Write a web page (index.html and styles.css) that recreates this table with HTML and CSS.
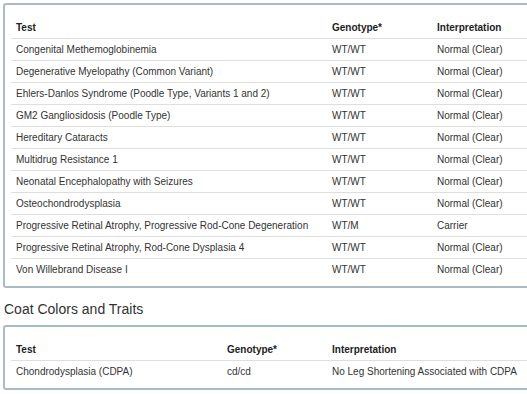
FILE: index.html
```html
<!DOCTYPE html>
<html lang="en">
<head>
  <meta charset="UTF-8" />
  <title>Genetic Results</title>
  <link rel="stylesheet" href="styles.css">
</head>
<body>

<!-- HEALTH RESULTS -->
<div class="card">
  <table class="results health">
    <thead>
      <tr>
        <th class="col-test">Test</th>
        <th class="col-geno">Genotype*</th>
        <th>Interpretation</th>
      </tr>
    </thead>
    <tbody>
      <tr><td>Congenital Methemoglobinemia</td><td>WT/WT</td><td>Normal (Clear)</td></tr>
      <tr><td>Degenerative Myelopathy (Common Variant)</td><td>WT/WT</td><td>Normal (Clear)</td></tr>
      <tr><td>Ehlers-Danlos Syndrome (Poodle Type, Variants 1 and 2)</td><td>WT/WT</td><td>Normal (Clear)</td></tr>
      <tr><td>GM2 Gangliosidosis (Poodle Type)</td><td>WT/WT</td><td>Normal (Clear)</td></tr>
      <tr><td>Hereditary Cataracts</td><td>WT/WT</td><td>Normal (Clear)</td></tr>
      <tr><td>Multidrug Resistance 1</td><td>WT/WT</td><td>Normal (Clear)</td></tr>
      <tr><td>Neonatal Encephalopathy with Seizures</td><td>WT/WT</td><td>Normal (Clear)</td></tr>
      <tr><td>Osteochondrodysplasia</td><td>WT/WT</td><td>Normal (Clear)</td></tr>
      <tr><td>Progressive Retinal Atrophy, Progressive Rod-Cone Degeneration</td><td>WT/M</td><td>Carrier</td></tr>
      <tr><td>Progressive Retinal Atrophy, Rod-Cone Dysplasia 4</td><td>WT/WT</td><td>Normal (Clear)</td></tr>
      <tr><td>Von Willebrand Disease I</td><td>WT/WT</td><td>Normal (Clear)</td></tr>
    </tbody>
  </table>
</div>

<h2 class="section-title">Coat Colors and Traits</h2>

<!-- TRAITS -->
<div class="card">
  <table class="results traits">
    <thead>
      <tr>
        <th class="col-test">Test</th>
        <th class="col-geno">Genotype*</th>
        <th>Interpretation</th>
      </tr>
    </thead>
    <tbody>
      <tr><td>Chondrodysplasia (CDPA)</td><td>cd/cd</td><td>No Leg Shortening Associated with CDPA</td></tr>
    </tbody>
  </table>
</div>

</body>
</html>
```

FILE: styles.css
```css
* {
  box-sizing: border-box;
}

body {
  margin: 0;
  padding: 3px 0 0 3px;
  font-family: 'Liberation Sans', Arial, sans-serif;
  font-size: 10px;
  color: #333;
  background: #fff;
  overflow: hidden;
}

.card {
  width: 560px;
  border: 2px solid #a9bcc6;
  border-right: none;
  border-radius: 3px 0 0 3px;
  padding: 12px 0 6px 6px;
}

.results {
  width: 100%;
  border-collapse: collapse;
}

.results th,
.results td {
  text-align: left;
  padding: 3px 5px;
  line-height: 15px;
  white-space: nowrap;
}

.results th {
  font-weight: bold;
  color: #222;
  padding: 3px 5px 3px;
}

.results td {
  border-top: 1px solid #dedede;
}

.health .col-test {
  width: 316px;
}

.traits .col-test {
  width: 211px;
}

.col-geno {
  width: 105px;
}

.section-title {
  margin: 11px 0 6px 1px;
  font-size: 14px;
  line-height: 20px;
  font-weight: normal;
  color: #333;
}
```
